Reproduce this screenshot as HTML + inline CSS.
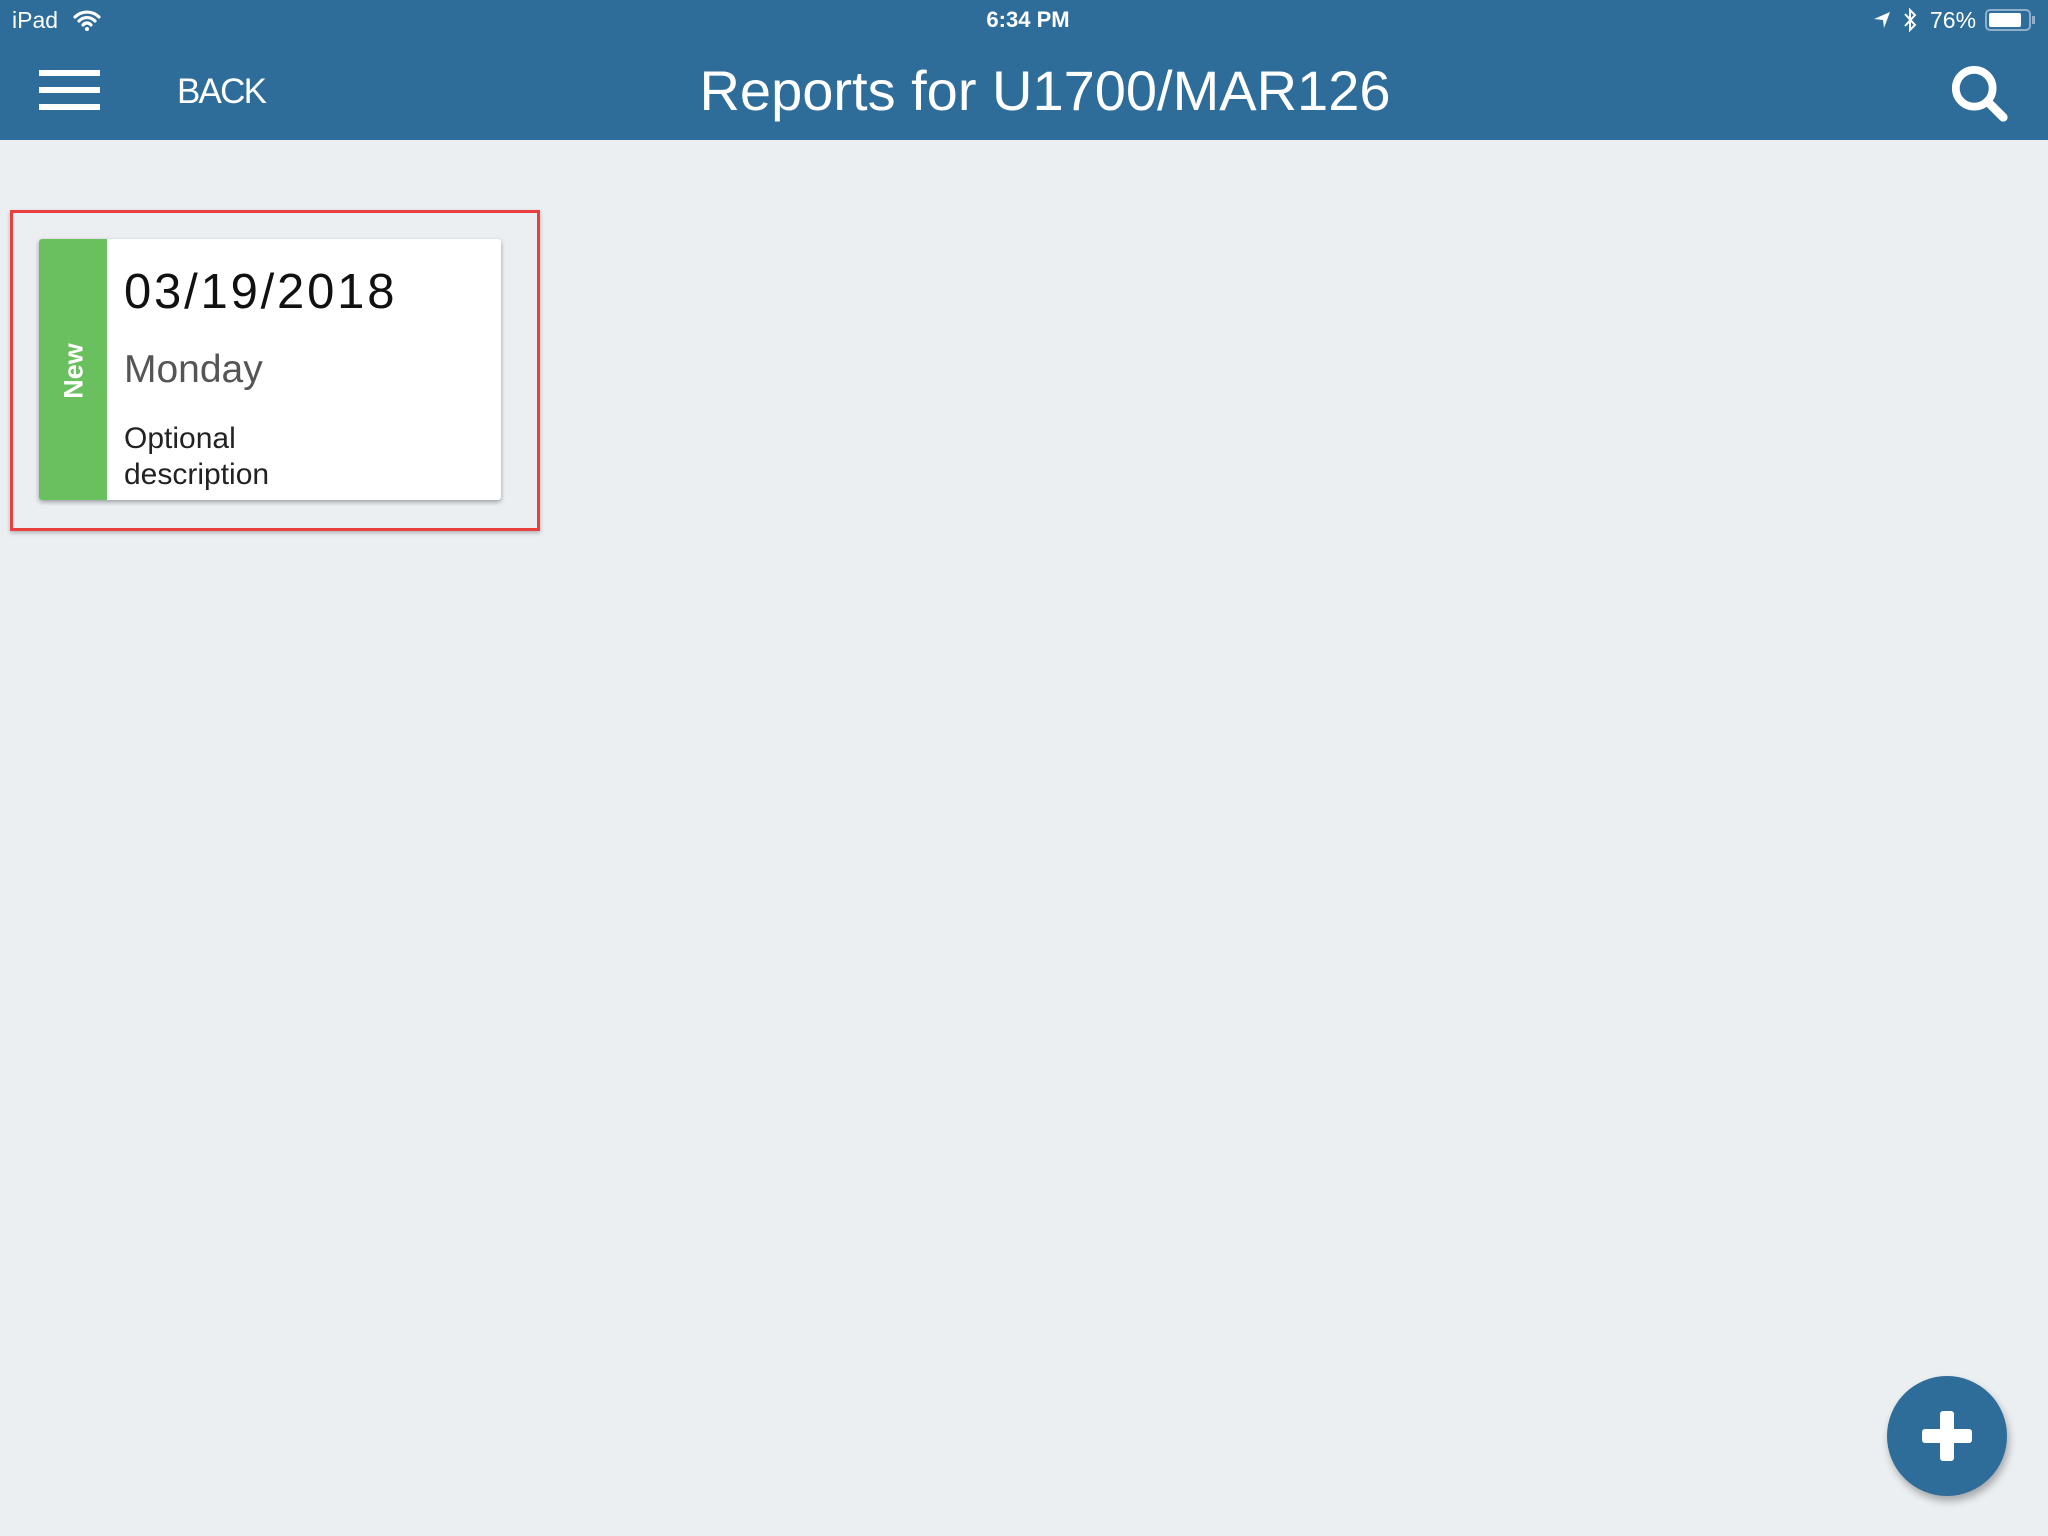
<!DOCTYPE html>
<html><head><meta charset="utf-8"><style>
*{margin:0;padding:0;box-sizing:border-box}
body{width:2048px;height:1536px;background:#ebeff2;font-family:"Liberation Sans",sans-serif;position:relative;overflow:hidden}
.hdr{position:absolute;left:0;top:0;width:2048px;height:140px;background:#2e6d99;color:#fff}
.abs{position:absolute;white-space:nowrap}
.bar{position:absolute;left:39px;width:61px;height:6px;background:#fff}
</style></head><body>
<div class="hdr">
  <div class="abs" style="left:12px;top:7px;font-size:23px">iPad</div>
  <svg class="abs" style="left:72px;top:8px" width="30" height="24" viewBox="0 0 30 24"><path d="M3 9a17 17 0 0 1 24 0M7 13a11 11 0 0 1 16 0M11 17a5 5 0 0 1 8 0" stroke="#fff" stroke-width="3.2" fill="none" stroke-linecap="round"/><circle cx="15" cy="21" r="2" fill="#fff"/></svg>
  <div class="abs" style="left:978px;top:7px;font-size:22px;font-weight:bold;width:100px;text-align:center">6:34 PM</div>
  <svg class="abs" style="left:1872px;top:10px" width="20" height="20" viewBox="0 0 20 20"><path d="M2 9L18 2L12 18L11 10Z" fill="#fff"/></svg>
  <svg class="abs" style="left:1902px;top:7px" width="16" height="26" viewBox="0 0 16 26"><path d="M3 7L13 18L8 23V3L13 8L3 19" stroke="#fff" stroke-width="2" fill="none"/></svg>
  <div class="abs" style="left:1930px;top:7px;font-size:23px">76%</div>
  <div class="abs" style="left:1985px;top:9px;width:46px;height:22px;border:2px solid #8fb0c8;border-radius:5px"><div style="margin:2px;width:32px;height:14px;background:#fff;border-radius:2px"></div></div>
  <div class="abs" style="left:2032px;top:16px;width:3px;height:8px;background:#8fb0c8"></div>
  <div class="bar" style="top:70px"></div><div class="bar" style="top:87px"></div><div class="bar" style="top:104px"></div>
  <div class="abs" style="left:177px;top:72px;font-size:35px;letter-spacing:-1.8px">BACK</div>
  <div class="abs" style="left:0;width:2090px;text-align:center;top:58px;font-size:56px;letter-spacing:0px">Reports for U1700/MAR126</div>
  <svg class="abs" style="left:1950px;top:64px" width="62" height="62" viewBox="0 0 64 64"><circle cx="25" cy="25" r="19" stroke="#fff" stroke-width="8" fill="none"/><path d="M39 39L55 55" stroke="#fff" stroke-width="9" stroke-linecap="round"/></svg>
</div>
<div class="abs" style="left:10px;top:210px;width:530px;height:321px;border:3px solid #e8403f;box-shadow:0 2px 4px rgba(0,0,0,.25)"></div>
<div class="abs" style="left:39px;top:239px;width:462px;height:261px;background:#fff;border-radius:3px;box-shadow:0 2px 5px rgba(0,0,0,.35);overflow:hidden">
  <div class="abs" style="left:0;top:0;width:68px;height:261px;background:#6abf5e"></div>
  <div class="abs" style="left:35px;top:132px;transform:translate(-50%,-50%) rotate(-90deg);color:#fff;font-weight:bold;font-size:27px">New</div>
  <div class="abs" style="left:85px;top:25px;font-size:49px;color:#111;letter-spacing:2.8px">03/19/2018</div>
  <div class="abs" style="left:85px;top:109px;font-size:39px;color:#555">Monday</div>
  <div class="abs" style="left:85px;top:182px;font-size:30px;line-height:36px;color:#222">Optional<br>description</div>
</div>
<div class="abs" style="left:1887px;top:1376px;width:120px;height:120px;border-radius:50%;background:#2e6d99;box-shadow:2px 5px 8px rgba(0,0,0,.3)">
  <div class="abs" style="left:35px;top:53px;width:50px;height:14px;background:#fff;border-radius:3px"></div>
  <div class="abs" style="left:53px;top:35px;width:14px;height:50px;background:#fff;border-radius:3px"></div>
</div>
</body></html>
